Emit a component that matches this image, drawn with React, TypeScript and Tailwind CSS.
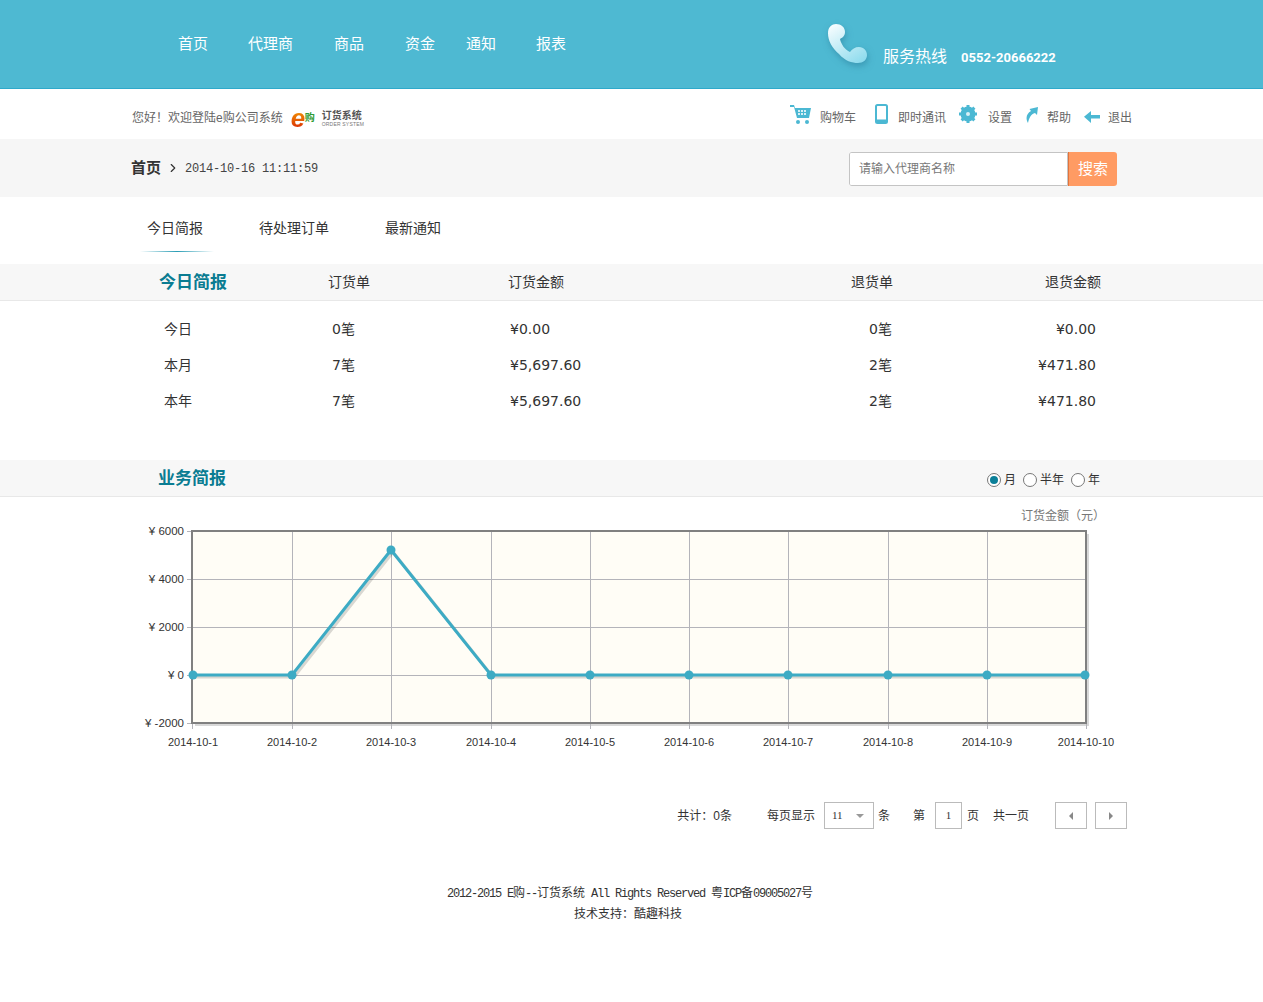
import { ChevronRight } from "lucide-react";

const font = "font-['Liberation_Sans','Noto_Sans_CJK_SC',sans-serif]";
const mono = "font-['Liberation_Mono'] text-[12px] tracking-[-1.2px]";
const rows = [
  { name: "今日", orders: "0笔", amount: "¥0.00", back: "0笔", backAmount: "¥0.00" },
  { name: "本月", orders: "7笔", amount: "¥5,697.60", back: "2笔", backAmount: "¥471.80" },
  { name: "本年", orders: "7笔", amount: "¥5,697.60", back: "2笔", backAmount: "¥471.80" },
];
const xs = [192, 292, 391, 491, 590, 689, 788, 888, 987, 1086];
const ys = [
  { y: 531, label: "¥ 6000" },
  { y: 579, label: "¥ 4000" },
  { y: 627, label: "¥ 2000" },
  { y: 675, label: "¥ 0" },
  { y: 723, label: "¥ -2000" },
];
const points = xs.map((x, i) => [i === 0 ? 193 : i === 9 ? 1085 : x, i === 2 ? 550 : 675]);
const line = points.map((p) => p.join(",")).join(" ");

function Phone() {
  return (
    <svg width="48" height="48" viewBox="0 0 48 48" className="drop-shadow-[1px_3px_3px_rgba(40,120,150,0.5)]">
      <defs>
        <linearGradient id="ph" gradientUnits="userSpaceOnUse" x1="10" y1="4" x2="36" y2="46">
          <stop offset="0" stopColor="#f4fcfe" />
          <stop offset="1" stopColor="#86d9ec" />
        </linearGradient>
      </defs>
      <g fill="url(#ph)">
        <path d="M4 12c0-6 4-9 8-9 5 0 9 3 9 8 0 4-3 6-5 7 1 5 5 11 10 13 2-3 5-5 9-5 5 0 8 4 8 8 0 5-4 8-9 8-6 0-13-2-19-9C8 27 4 20 4 12z" />
      </g>
    </svg>
  );
}

function Logo() {
  return (
    <div className="ml-[8px] flex h-[24px] w-[72px] items-center">
      <span className="w-[14px] bg-gradient-to-b from-[#f5a300] to-[#d81e05] bg-clip-text font-['Liberation_Sans'] text-[26px] leading-[22px] font-bold text-transparent italic">e</span>
      <span className="w-[11px] text-[10px] leading-[10px] font-bold text-[#2f9a34]">购</span>
      <div className="ml-[6px] flex w-[41px] flex-col">
        <span className="text-[10px] leading-[11px] font-bold text-[#555555]">订货系统</span>
        <span className="text-[5px] leading-[6px] tracking-[0.2px] whitespace-nowrap text-[#777777]">ORDER SYSTEM</span>
      </div>
    </div>
  );
}

function Cart() {
  return (
    <svg width="22" height="20" viewBox="0 0 22 20" fill="#4bb8d3">
      <path d="M0 0h4l1 3h16l-2 10H7L4 2H0z" />
      <path d="M8 5h2v2H8zm3 0h2v2h-2zm3 0h2v2h-2zM8 8h2v2H8zm3 0h2v2h-2zm3 0h2v2h-2z" fill="#d8f0f6" />
      <circle cx="8" cy="17" r="2" />
      <circle cx="17" cy="17" r="2" />
    </svg>
  );
}

function Mobile() {
  return (
    <svg width="13" height="20" viewBox="0 0 13 20">
      <rect x="1" y="1" width="11" height="18" rx="1.5" fill="#fff" stroke="#4bb8d3" strokeWidth="2" />
      <rect x="1" y="15.5" width="11" height="3.5" fill="#4bb8d3" />
    </svg>
  );
}

function Gear() {
  return (
    <svg width="18" height="18" viewBox="0 0 18 18">
      <circle cx="9" cy="9" r="5.5" fill="none" stroke="#4bb8d3" strokeWidth="4" />
      <path d="M9 0v18M0 9h18M2.6 2.6l12.8 12.8M15.4 2.6 2.6 15.4" stroke="#4bb8d3" strokeWidth="3" />
      <circle cx="9" cy="9" r="4.5" fill="#4bb8d3" />
      <circle cx="9" cy="9" r="2" fill="#d8f0f6" />
    </svg>
  );
}

function Help() {
  return (
    <svg width="12" height="16" viewBox="0 0 12 16" fill="#4bb8d3">
      <path d="M2 16C-1 11 1 6 5 4L3.5 2 12 0l-1 8-2-2C5 7 3 11 2 16z" />
    </svg>
  );
}

function Back() {
  return (
    <svg width="16" height="12" viewBox="0 0 16 12" fill="#4bb8d3">
      <path d="M7 0v4h9v3.5H7V12L0 5.8z" />
    </svg>
  );
}

function Radio({ on, label }: { on?: boolean; label: string }) {
  return (
    <div className="flex items-center gap-[3px]">
      <span className="flex h-[14px] w-[14px] items-center justify-center rounded-full border border-[#777777] bg-white">
        {on && <span className="h-[8px] w-[8px] rounded-full bg-[#0b7f98]" />}
      </span>
      <span>{label}</span>
    </div>
  );
}

function Chart() {
  return (
    <svg width="1263" height="235" viewBox="0 525 1263 235">
      <rect x="195" y="534" width="894" height="192" fill="#d8d8d8" />
      <rect x="192" y="531" width="894" height="192" fill="#fffdf6" />
      {xs.map((x) => (
        <line key={x} x1={x + 0.5} y1="531" x2={x + 0.5} y2="729" stroke="#b4b4ba" />
      ))}
      {ys.map((t) => (
        <line key={t.y} x1="187" y1={t.y + 0.5} x2="1086" y2={t.y + 0.5} stroke="#b4b4ba" />
      ))}
      <rect x="192" y="531" width="894" height="192" fill="none" stroke="#808080" strokeWidth="2" />
      <polyline points={points.map((p) => `${p[0] + 2},${p[1] + 2}`).join(" ")} fill="none" stroke="#000" strokeOpacity="0.15" strokeWidth="3" />
      <polyline points={line} fill="none" stroke="#3dabc4" strokeWidth="3" />
      {points.map((p) => (
        <circle key={p[0]} cx={p[0]} cy={p[1]} r="4.5" fill="#3dabc4" />
      ))}
      {ys.map((t) => (
        <text key={t.label} x="184" y={t.y + 4} textAnchor="end" fontSize="11.5" fill="#333333">
          {t.label}
        </text>
      ))}
      {xs.map((x, i) => (
        <text key={x} x={i === 0 ? x + 1 : x} y="746" textAnchor="middle" fontSize="11" fill="#333333">
          2014-10-{i + 1}
        </text>
      ))}
    </svg>
  );
}

export default function App() {
  return (
    <div className={`${font} min-h-[1002px] bg-white text-[12px] text-[#333333]`}>
      <header className="flex h-[89px] border-b border-[#2ea9cb] bg-[#4eb9d2] text-white">
        <nav className="flex items-center pb-[2px] pl-[178px] text-[15px] leading-none">
          <a>首页</a>
          <a className="ml-[40px]">代理商</a>
          <a className="ml-[41px]">商品</a>
          <a className="ml-[41px]">资金</a>
          <a className="ml-[31px]">通知</a>
          <a className="ml-[40px]">报表</a>
        </nav>
        <div className="ml-[258px] flex pt-[21px]">
          <Phone />
          <span className="mt-[26px] ml-[11px] text-[16px] leading-[20px]">服务热线</span>
          <span className="mt-[27px] ml-[14px] font-['Roboto'] text-[13px] leading-[20px] font-bold">0552-20666222</span>
        </div>
      </header>

      <div className="flex h-[50px] items-center pt-[8px] pr-[131px] pl-[132px] text-[#666666]">
        <span>{"您好\uFF01欢迎登陆e购公司系统"}</span>
        <Logo />
        <div className="ml-auto flex items-center">
          <span className="mb-[7px]"><Cart /></span>
          <span className="ml-[8px]">购物车</span>
          <span className="mb-[8px] ml-[19px]"><Mobile /></span>
          <span className="ml-[10px]">即时通讯</span>
          <span className="mb-[8px] ml-[13px]"><Gear /></span>
          <span className="ml-[11px]">设置</span>
          <span className="mb-[6px] ml-[14px]"><Help /></span>
          <span className="ml-[9px]">帮助</span>
          <span className="mb-[3px] ml-[13px]"><Back /></span>
          <span className="ml-[8px]">退出</span>
        </div>
      </div>

      <div className="flex h-[58px] items-center bg-[#f6f6f6] pt-[2px] pr-[146px] pl-[131px]">
        <span className="mb-[2px] text-[15px] font-bold">首页</span>
        <ChevronRight className="mb-[2px] ml-[5px] h-[14px] w-[14px] text-[#333333]" strokeWidth={2} />
        <span className="ml-[5px] font-['Liberation_Mono'] text-[12px] tracking-[-0.2px] text-[#444444]">2014-10-16 11:11:59</span>
        <div className="ml-auto flex h-[34px] w-[268px] overflow-hidden rounded-[3px]">
          <div className="flex h-full w-[219px] items-center rounded-l-[2px] border border-[#c4c4c4] bg-white pl-[9px] text-[#777777]">请输入代理商名称</div>
          <div className="flex h-full w-[49px] items-center justify-center border-l border-[#e2743c] bg-[#ff9b63] text-[15px] text-white">搜索</div>
        </div>
      </div>

      <div className="flex h-[55px] pl-[140px] text-[14px] text-[#333333]">
        <div className="flex w-[74px] flex-col items-center">
          <span className="mt-[21px] pr-[4px] leading-[20px]">今日简报</span>
          <span className="mt-auto h-[1px] w-full bg-gradient-to-r from-transparent via-[#2a9db5] to-transparent" />
        </div>
        <span className="mt-[21px] ml-[45px] leading-[20px]">待处理订单</span>
        <span className="mt-[21px] ml-[56px] leading-[20px]">最新通知</span>
      </div>

      <div className="mt-[12px] flex h-[37px] items-center border-b border-[#e8e8e8] bg-[#f7f7f7] pl-[158px] text-[14px]">
        <span className="w-[170px] pt-[2px] pl-[1px] text-[17px] font-bold text-[#0a7c92]">今日简报</span>
        <span className="w-[179px]">订货单</span>
        <span className="w-[385px] pl-[1px]">订货金额</span>
        <span className="w-[0px] -translate-x-[41px] whitespace-nowrap">退货单</span>
        <span className="w-[209px] text-right">退货金额</span>
      </div>

      <div className="pt-[10px] pb-[41px] text-[14px]">
        {rows.map((r) => (
          <div key={r.name} className="flex h-[36px] items-center pl-[158px] text-[#333333]">
            <span className="w-[170px] pl-[6px]">{r.name}</span>
            <span className="w-[179px] pl-[4px] font-['DejaVu_Sans','Noto_Sans_CJK_SC',sans-serif]">{r.orders}</span>
            <span className="w-[385px] pl-[3px] font-['DejaVu_Sans',sans-serif]">{r.amount}</span>
            <span className="w-[0px] -translate-x-[23px] font-['DejaVu_Sans','Noto_Sans_CJK_SC',sans-serif] whitespace-nowrap">{r.back}</span>
            <span className="w-[209px] pr-[5px] text-right font-['DejaVu_Sans',sans-serif]">{r.backAmount}</span>
          </div>
        ))}
      </div>

      <div className="flex h-[37px] items-center border-b border-[#e8e8e8] bg-[#f7f7f7] pt-[2px] pr-[163px] pl-[158px]">
        <span className="text-[17px] font-bold text-[#0a7c92]">业务简报</span>
        <div className="mt-[2px] ml-auto flex gap-[7px] text-[12px]">
          <Radio on label="月" />
          <Radio label="半年" />
          <Radio label="年" />
        </div>
      </div>
      <div className="h-[28px] pt-[11px] pr-[158px] text-right leading-[16px] text-[#777777]">{"订货金额\uFF08元\uFF09"}</div>
      <Chart />

      <div className="mt-[42px] flex h-[27px] items-center justify-end pr-[136px] text-[#333333]">
        <span>{"共计\uFF1A0条"}</span>
        <span className="ml-[35px]">每页显示</span>
        <div className="ml-[9px] flex h-[27px] w-[50px] items-center border border-[#bbbbbb] pr-[9px] pl-[7px]">
          <span className="font-['Liberation_Serif'] text-[11px]">11</span>
          <span className="ml-auto h-0 w-0 border-x-[4px] border-t-[4px] border-x-transparent border-t-[#999999]" />
        </div>
        <span className="ml-[4px]">条</span>
        <span className="ml-[23px]">第</span>
        <div className="ml-[10px] flex h-[27px] w-[27px] items-center justify-center border border-[#bbbbbb] font-['Liberation_Serif'] text-[11px]">1</div>
        <span className="ml-[5px]">页</span>
        <span className="ml-[14px]">共一页</span>
        <div className="ml-[26px] flex h-[27px] w-[32px] items-center justify-center border border-[#bbbbbb]">
          <span className="h-0 w-0 border-y-[4px] border-r-[4px] border-y-transparent border-r-[#888888]" />
        </div>
        <div className="ml-[8px] flex h-[27px] w-[32px] items-center justify-center border border-[#bbbbbb]">
          <span className="h-0 w-0 border-y-[4px] border-l-[4px] border-y-transparent border-l-[#888888]" />
        </div>
      </div>

      <footer className="mt-[54px] text-center leading-[20px] text-[#333333]">
        <p className="pr-[3px]">
          <span className={mono}>2012-2015 E</span>购
          <span className={mono}>--</span>订货系统
          <span className={`${mono} whitespace-pre`}> All Rights Reserved </span>粤
          <span className={mono}>ICP</span>备
          <span className={mono}>09005027</span>号
        </p>
        <p className="pr-[7px]">{"技术支持\uFF1A酷趣科技"}</p>
      </footer>
    </div>
  );
}
